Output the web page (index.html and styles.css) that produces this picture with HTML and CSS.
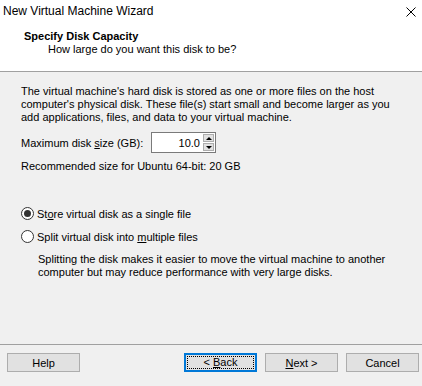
FILE: index.html
```html
<!DOCTYPE html>
<html lang="en">
<head>
    <meta charset="UTF-8">
    <title>New Virtual Machine Wizard</title>
    <link rel="stylesheet" href="styles.css">
</head>
<body>
    <div class="window">
        <div class="header">
            <div class="titlebar">
                <span class="title">New Virtual Machine Wizard</span>
                <svg class="close" width="10" height="10" viewBox="0 0 10 10">
                    <path d="M0.5 0.5 L9.5 9.5 M9.5 0.5 L0.5 9.5" stroke="#000" stroke-width="1"/>
                </svg>
            </div>
            <div class="page-title">Specify Disk Capacity</div>
            <div class="page-subtitle">How large do you want this disk to be?</div>
        </div>

        <div class="content">
            <p class="intro">
                The virtual machine's hard disk is stored as one or more files on the host<br>
                computer's physical disk. These file(s) start small and become larger as you<br>
                add applications, files, and data to your virtual machine.
            </p>

            <div class="size-row">
                <label for="diskSize">Maximum disk <u>s</u>ize (GB):</label>
                <div class="spinbox">
                    <input type="text" id="diskSize" value="10.0">
                    <div class="spin-buttons">
                        <div class="spin-btn"><span class="arrow up"></span></div>
                        <div class="spin-btn"><span class="arrow down"></span></div>
                    </div>
                </div>
            </div>

            <p class="recommended">Recommended size for Ubuntu 64-bit: 20 GB</p>

            <div class="options">
                <div class="radio-row">
                    <span class="radio checked"></span>
                    <span>St<u>o</u>re virtual disk as a single file</span>
                </div>
                <div class="radio-row">
                    <span class="radio"></span>
                    <span>Split virtual disk into <u>m</u>ultiple files</span>
                </div>
                <p class="split-note">
                    Splitting the disk makes it easier to move the virtual machine to another<br>
                    computer but may reduce performance with very large disks.
                </p>
            </div>
        </div>

        <div class="footer">
            <button type="button" class="btn">Help</button>
            <div class="nav-buttons">
                <button type="button" class="btn focused"><span class="focus-ring">&lt;&nbsp;<u>B</u>ack</span></button>
                <button type="button" class="btn"><u>N</u>ext &gt;</button>
                <button type="button" class="btn">Cancel</button>
            </div>
        </div>
    </div>
</body>
</html>
```

FILE: styles.css
```css
body {
    margin: 0;
    font-family: 'Liberation Sans', Arial, sans-serif;
    font-size: 11px;
    color: #000;
    background: #f0f0f0;
}
.window {
    width: 422px;
    height: 386px;
    display: flex;
    flex-direction: column;
    background: #f0f0f0;
    overflow: hidden;
}
.header {
    background: #fff;
    height: 72px;
    border-bottom: 1px solid #a0a0a0;
    box-sizing: border-box;
}
.titlebar {
    display: flex;
    justify-content: space-between;
    align-items: center;
    height: 22px;
    padding: 0 6px 0 3px;
}
.title {
    font-size: 12px;
}
.close {
    margin-top: 2px;
}
.page-title {
    font-weight: bold;
    padding: 8px 0 0 24px;
    line-height: 13px;
}
.page-subtitle {
    padding-left: 48px;
    line-height: 13px;
}
.content {
    flex: 1;
    padding: 13px 21px 0;
}
p {
    margin: 0;
    line-height: 13px;
}
.size-row {
    display: flex;
    align-items: center;
    margin-top: 8px;
    height: 21px;
}
.size-row label {
    width: 130px;
}
.spinbox {
    display: flex;
    width: 65px;
    height: 21px;
    border: 1px solid #7a7a7a;
    box-sizing: border-box;
    background: #fff;
}
.spinbox input {
    width: 48px;
    border: none;
    padding: 0 3px 0 0;
    margin: 0;
    text-align: right;
    font-family: inherit;
    font-size: 11px;
    outline: none;
    background: transparent;
}
.spin-buttons {
    display: flex;
    flex-direction: column;
    width: 15px;
    padding: 1px 1px 1px 0;
    gap: 1px;
}
.spin-btn {
    flex: 1;
    background: #e1e1e1;
    border: 1px solid #adadad;
    display: flex;
    align-items: center;
    justify-content: center;
}
.arrow {
    width: 0;
    height: 0;
    border-left: 3px solid transparent;
    border-right: 3px solid transparent;
}
.arrow.up {
    border-bottom: 3px solid #000;
}
.arrow.down {
    border-top: 3px solid #000;
}
.recommended {
    margin-top: 7px;
}
.options {
    margin-top: 34px;
}
.radio-row {
    display: flex;
    align-items: center;
    gap: 3px;
    height: 13px;
    margin-bottom: 10px;
}
.radio {
    width: 13px;
    height: 13px;
    border: 1px solid #333;
    border-radius: 50%;
    box-sizing: border-box;
    background: #fff;
    display: flex;
    align-items: center;
    justify-content: center;
}
.radio.checked::after {
    content: "";
    width: 7px;
    height: 7px;
    border-radius: 50%;
    background: #333;
}
.split-note {
    margin-top: 3px;
    padding-left: 17px;
}
.footer {
    height: 33px;
    border-top: 1px solid #a0a0a0;
    display: flex;
    justify-content: space-between;
    align-items: flex-start;
    padding: 8px 3px 0 7px;
}
.nav-buttons {
    display: flex;
    gap: 8px;
}
.btn {
    width: 73px;
    height: 19px;
    margin: 0;
    padding: 0;
    background: #e1e1e1;
    border: 1px solid #adadad;
    font-family: inherit;
    font-size: 11px;
    color: #000;
}
.btn.focused {
    border: 2px solid #0078d7;
    padding: 1px;
}
.focus-ring {
    display: block;
    height: 100%;
    line-height: 11px;
    box-sizing: border-box;
    border: 1px dotted #000;
    text-align: center;
}
```
